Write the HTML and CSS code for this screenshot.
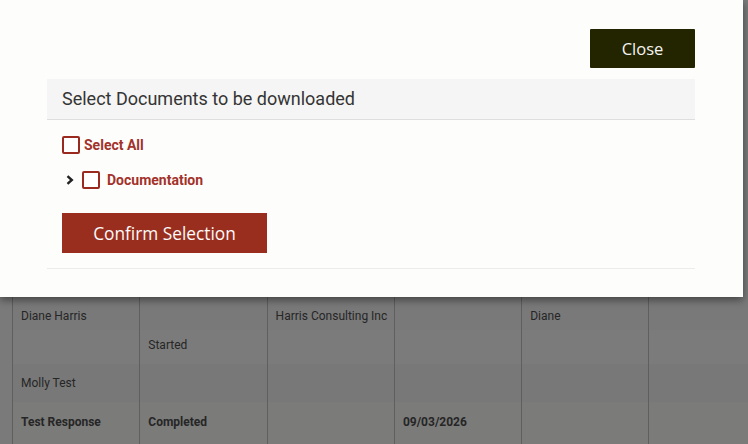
FILE: index.html
```html
<!DOCTYPE html>
<html>
<head>
<meta charset="utf-8">
<link rel="stylesheet" href="styles.css">
</head>
<body>
<div class="page">
  <div class="modal">
    <div class="modal-top">
      <button class="btn-close">Close</button>
    </div>
    <div class="panel">
      <div class="panel-head">Select Documents to be downloaded</div>
      <div class="panel-body">
        <label class="check-row">
          <span class="box"></span>
          <span class="lbl">Select All</span>
        </label>
        <div class="check-row tree">
          <svg class="chev" width="8" height="10" viewBox="0 0 8 10"><path d="M1.5 1.2 L5.8 5 L1.5 8.8" fill="none" stroke="#222" stroke-width="2.4"/></svg>
          <span class="box"></span>
          <span class="lbl">Documentation</span>
        </div>
        <button class="btn-confirm">Confirm Selection</button>
      </div>
    </div>
  </div>
  <div class="table">
    <div class="row r1">
      <div class="cell"><span class="t top">Diane Harris</span></div>
      <div class="cell"><span class="t mid">Started</span></div>
      <div class="cell"><span class="t top">Harris Consulting Inc</span></div>
      <div class="cell"></div>
      <div class="cell"><span class="t top">Diane</span></div>
      <div class="cell"></div>
    </div>
    <div class="row r2">
      <div class="cell"><span class="t">Molly Test</span></div>
      <div class="cell"></div>
      <div class="cell"></div>
      <div class="cell"></div>
      <div class="cell"></div>
      <div class="cell"></div>
    </div>
    <div class="row r3">
      <div class="cell"><span class="t b">Test Response</span></div>
      <div class="cell"><span class="t b">Completed</span></div>
      <div class="cell"></div>
      <div class="cell"><span class="t b">09/03/2026</span></div>
      <div class="cell"></div>
      <div class="cell"></div>
    </div>
  </div>
</div>
</body>
</html>
```
FILE: styles.css
```css
html, body {
  margin: 0;
  padding: 0;
}
body {
  background: #7a7a7a;
  font-family: Roboto, "Liberation Sans", sans-serif;
  width: 748px;
  height: 444px;
  overflow: hidden;
}
.page {
  position: relative;
  width: 748px;
  height: 444px;
}
.modal {
  position: relative;
  z-index: 2;
  width: 743px;
  height: 297px;
  box-sizing: border-box;
  background: #fdfdfc;
  padding: 29px 48px 0 47px;
  box-shadow: 0 3px 8px rgba(0,0,0,0.45);
}
.modal-top {
  display: flex;
  justify-content: flex-end;
  margin-bottom: 11px;
}
.btn-close {
  width: 105px;
  height: 39px;
  border: none;
  background: #232500;
  color: #f4f4f0;
  font-family: "Open Sans", sans-serif;
  font-size: 16.5px;
  font-weight: 500;
  padding: 0;
  border-radius: 1px;
}
.panel {
  border-bottom: 1px solid #ececec;
}
.panel-head {
  height: 41px;
  box-sizing: border-box;
  background: #f5f5f5;
  border-bottom: 1px solid #dedede;
  padding-left: 15px;
  padding-bottom: 2px;
  display: flex;
  align-items: center;
  font-size: 18px;
  color: #343434;
}
.panel-body {
  padding: 16px 15px 15px 15px;
}
.check-row {
  display: flex;
  align-items: center;
  height: 18px;
}
.check-row.tree {
  margin-top: 17px;
  padding-left: 4px;
}
.chev {
  margin-right: 8px;
}
.box {
  width: 18px;
  height: 18px;
  box-sizing: border-box;
  border: 2px solid #9a2a20;
  border-radius: 2px;
  background: #fff;
}
.lbl {
  margin-left: 4px;
  font-size: 14px;
  font-weight: 700;
  color: #a2322a;
}
.tree .lbl {
  margin-left: 7px;
}
.btn-confirm {
  margin-top: 24px;
  width: 205px;
  height: 40px;
  border: none;
  background: #992e1f;
  color: #fbfbfb;
  font-family: "Open Sans", sans-serif;
  font-size: 17.3px;
  font-weight: 500;
  padding: 0;
  display: block;
}
.table {
  margin-left: 12px;
  color: #262626;
  font-size: 12px;
}
.row {
  display: grid;
  grid-template-columns: repeat(6, 127.3px);
}
.cell {
  border-left: 1px solid #5f5f5f;
  box-sizing: border-box;
  padding-left: 8px;
  display: flex;
  flex-direction: column;
}
.r1 { height: 67px; background: linear-gradient(#797979 0, #797979 33px, #7b7b7b 33px); }
.r1 .top { margin-top: 12px; }
.r1 .mid { margin-top: 41px; }
.r2 { height: 38px; background: #787878; }
.r2 .cell { justify-content: center; }
.r3 { height: 42px; background: #7b7b7a; }
.r3 .cell { padding-top: 13px; }
.b { font-weight: 700; }
```
